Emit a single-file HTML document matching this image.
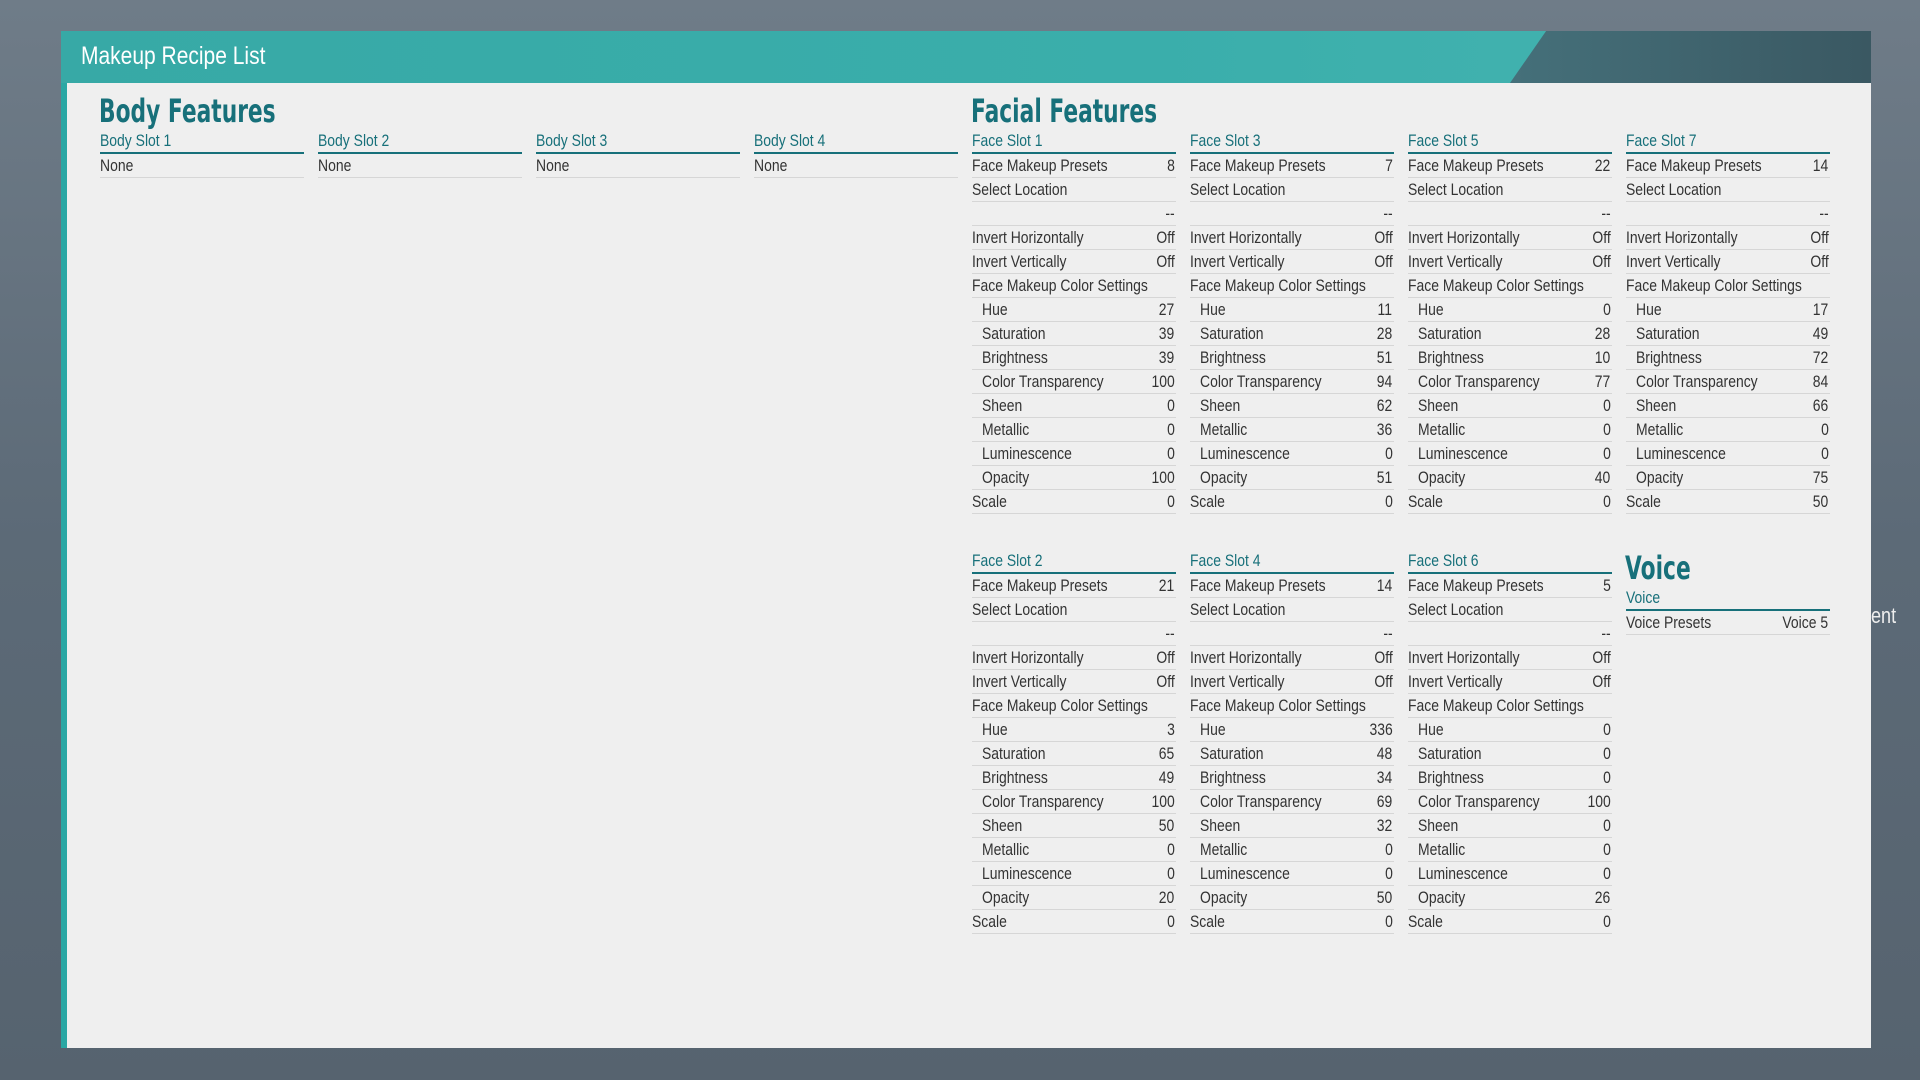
<!DOCTYPE html>
<html><head><meta charset="utf-8"><style>
*{margin:0;padding:0;box-sizing:border-box}
body{width:1920px;height:1080px;overflow:hidden;position:relative;background:linear-gradient(180deg,#6f7c88 0%,#5c6a77 50%,#56636f 100%);font-family:"Liberation Sans",sans-serif}
.panel{position:absolute;left:61px;top:31px;width:1810px;height:1017px;background:#efefef;border-left:6px solid #2aa7a4}
.hdr{position:absolute;left:61px;top:31px;width:1810px;height:52px;background:linear-gradient(90deg,#37a9a6 0%,#3aaeab 60%,#46b4b1 100%)}
.hdr2{position:absolute;left:1510px;top:31px;width:361px;height:52px;background:linear-gradient(90deg,#45707a,#3a5862);clip-path:polygon(10% 0,100% 0,100% 100%,0 100%)}
.ttl{position:absolute;left:81px;top:42px;color:#fff;font-size:25px;transform:scaleX(.84);transform-origin:left;white-space:nowrap}
.h1{position:absolute;font-size:32px;font-weight:bold;color:#17707a;font-family:"DejaVu Sans","Liberation Sans",sans-serif;transform:scaleX(.68);transform-origin:left;white-space:nowrap}
.col{position:absolute;width:204px;font-size:17px;color:#333}
.sh{height:24px;line-height:22px;color:#17707a;border-bottom:2px solid #17707a;white-space:nowrap}
.sh span{display:inline-block;transform:scaleX(.82);transform-origin:left}
.r{height:24px;line-height:23px;border-bottom:1px solid #d6d6d6;display:flex;justify-content:space-between;white-space:nowrap}
.r span{display:inline-block;transform:scaleX(.82);transform-origin:left}
.r b{font-weight:normal;padding-right:2px;display:inline-block;transform:scaleX(.82);transform-origin:right}
.i span{margin-left:10px}
.ent{position:absolute;left:1871px;top:603px;color:#eee;font-size:22px;transform:scaleX(.82);transform-origin:left}
</style></head><body>
<div class="panel"></div>
<div class="hdr"></div>
<div class="hdr2"></div>
<div class="ttl">Makeup Recipe List</div>
<div class="h1" style="left:99px;top:92px">Body Features</div>
<div class="h1" style="left:971px;top:92px">Facial Features</div>
<div class="col" style="left:100px;top:130px"><div class="sh"><span>Body Slot 1</span></div><div class="r"><span>None</span></div></div>
<div class="col" style="left:318px;top:130px"><div class="sh"><span>Body Slot 2</span></div><div class="r"><span>None</span></div></div>
<div class="col" style="left:536px;top:130px"><div class="sh"><span>Body Slot 3</span></div><div class="r"><span>None</span></div></div>
<div class="col" style="left:754px;top:130px"><div class="sh"><span>Body Slot 4</span></div><div class="r"><span>None</span></div></div>

<div class="col" style="left:972px;top:130px"><div class="sh"><span>Face Slot 1</span></div>
<div class="r"><span>Face Makeup Presets</span><b>8</b></div><div class="r"><span>Select Location</span></div><div class="r"><span></span><b>--</b></div>
<div class="r"><span>Invert Horizontally</span><b>Off</b></div><div class="r"><span>Invert Vertically</span><b>Off</b></div><div class="r"><span>Face Makeup Color Settings</span></div>
<div class="r i"><span>Hue</span><b>27</b></div><div class="r i"><span>Saturation</span><b>39</b></div><div class="r i"><span>Brightness</span><b>39</b></div><div class="r i"><span>Color Transparency</span><b>100</b></div><div class="r i"><span>Sheen</span><b>0</b></div><div class="r i"><span>Metallic</span><b>0</b></div><div class="r i"><span>Luminescence</span><b>0</b></div><div class="r i"><span>Opacity</span><b>100</b></div><div class="r"><span>Scale</span><b>0</b></div></div>

<div class="col" style="left:1190px;top:130px"><div class="sh"><span>Face Slot 3</span></div>
<div class="r"><span>Face Makeup Presets</span><b>7</b></div><div class="r"><span>Select Location</span></div><div class="r"><span></span><b>--</b></div>
<div class="r"><span>Invert Horizontally</span><b>Off</b></div><div class="r"><span>Invert Vertically</span><b>Off</b></div><div class="r"><span>Face Makeup Color Settings</span></div>
<div class="r i"><span>Hue</span><b>11</b></div><div class="r i"><span>Saturation</span><b>28</b></div><div class="r i"><span>Brightness</span><b>51</b></div><div class="r i"><span>Color Transparency</span><b>94</b></div><div class="r i"><span>Sheen</span><b>62</b></div><div class="r i"><span>Metallic</span><b>36</b></div><div class="r i"><span>Luminescence</span><b>0</b></div><div class="r i"><span>Opacity</span><b>51</b></div><div class="r"><span>Scale</span><b>0</b></div></div>

<div class="col" style="left:1408px;top:130px"><div class="sh"><span>Face Slot 5</span></div>
<div class="r"><span>Face Makeup Presets</span><b>22</b></div><div class="r"><span>Select Location</span></div><div class="r"><span></span><b>--</b></div>
<div class="r"><span>Invert Horizontally</span><b>Off</b></div><div class="r"><span>Invert Vertically</span><b>Off</b></div><div class="r"><span>Face Makeup Color Settings</span></div>
<div class="r i"><span>Hue</span><b>0</b></div><div class="r i"><span>Saturation</span><b>28</b></div><div class="r i"><span>Brightness</span><b>10</b></div><div class="r i"><span>Color Transparency</span><b>77</b></div><div class="r i"><span>Sheen</span><b>0</b></div><div class="r i"><span>Metallic</span><b>0</b></div><div class="r i"><span>Luminescence</span><b>0</b></div><div class="r i"><span>Opacity</span><b>40</b></div><div class="r"><span>Scale</span><b>0</b></div></div>

<div class="col" style="left:1626px;top:130px"><div class="sh"><span>Face Slot 7</span></div>
<div class="r"><span>Face Makeup Presets</span><b>14</b></div><div class="r"><span>Select Location</span></div><div class="r"><span></span><b>--</b></div>
<div class="r"><span>Invert Horizontally</span><b>Off</b></div><div class="r"><span>Invert Vertically</span><b>Off</b></div><div class="r"><span>Face Makeup Color Settings</span></div>
<div class="r i"><span>Hue</span><b>17</b></div><div class="r i"><span>Saturation</span><b>49</b></div><div class="r i"><span>Brightness</span><b>72</b></div><div class="r i"><span>Color Transparency</span><b>84</b></div><div class="r i"><span>Sheen</span><b>66</b></div><div class="r i"><span>Metallic</span><b>0</b></div><div class="r i"><span>Luminescence</span><b>0</b></div><div class="r i"><span>Opacity</span><b>75</b></div><div class="r"><span>Scale</span><b>50</b></div></div>

<div class="col" style="left:972px;top:550px"><div class="sh"><span>Face Slot 2</span></div>
<div class="r"><span>Face Makeup Presets</span><b>21</b></div><div class="r"><span>Select Location</span></div><div class="r"><span></span><b>--</b></div>
<div class="r"><span>Invert Horizontally</span><b>Off</b></div><div class="r"><span>Invert Vertically</span><b>Off</b></div><div class="r"><span>Face Makeup Color Settings</span></div>
<div class="r i"><span>Hue</span><b>3</b></div><div class="r i"><span>Saturation</span><b>65</b></div><div class="r i"><span>Brightness</span><b>49</b></div><div class="r i"><span>Color Transparency</span><b>100</b></div><div class="r i"><span>Sheen</span><b>50</b></div><div class="r i"><span>Metallic</span><b>0</b></div><div class="r i"><span>Luminescence</span><b>0</b></div><div class="r i"><span>Opacity</span><b>20</b></div><div class="r"><span>Scale</span><b>0</b></div></div>

<div class="col" style="left:1190px;top:550px"><div class="sh"><span>Face Slot 4</span></div>
<div class="r"><span>Face Makeup Presets</span><b>14</b></div><div class="r"><span>Select Location</span></div><div class="r"><span></span><b>--</b></div>
<div class="r"><span>Invert Horizontally</span><b>Off</b></div><div class="r"><span>Invert Vertically</span><b>Off</b></div><div class="r"><span>Face Makeup Color Settings</span></div>
<div class="r i"><span>Hue</span><b>336</b></div><div class="r i"><span>Saturation</span><b>48</b></div><div class="r i"><span>Brightness</span><b>34</b></div><div class="r i"><span>Color Transparency</span><b>69</b></div><div class="r i"><span>Sheen</span><b>32</b></div><div class="r i"><span>Metallic</span><b>0</b></div><div class="r i"><span>Luminescence</span><b>0</b></div><div class="r i"><span>Opacity</span><b>50</b></div><div class="r"><span>Scale</span><b>0</b></div></div>

<div class="col" style="left:1408px;top:550px"><div class="sh"><span>Face Slot 6</span></div>
<div class="r"><span>Face Makeup Presets</span><b>5</b></div><div class="r"><span>Select Location</span></div><div class="r"><span></span><b>--</b></div>
<div class="r"><span>Invert Horizontally</span><b>Off</b></div><div class="r"><span>Invert Vertically</span><b>Off</b></div><div class="r"><span>Face Makeup Color Settings</span></div>
<div class="r i"><span>Hue</span><b>0</b></div><div class="r i"><span>Saturation</span><b>0</b></div><div class="r i"><span>Brightness</span><b>0</b></div><div class="r i"><span>Color Transparency</span><b>100</b></div><div class="r i"><span>Sheen</span><b>0</b></div><div class="r i"><span>Metallic</span><b>0</b></div><div class="r i"><span>Luminescence</span><b>0</b></div><div class="r i"><span>Opacity</span><b>26</b></div><div class="r"><span>Scale</span><b>0</b></div></div>

<div class="h1" style="left:1625px;top:549px">Voice</div>
<div class="col" style="left:1626px;top:587px"><div class="sh"><span>Voice</span></div><div class="r"><span>Voice Presets</span><b>Voice 5</b></div></div>
<div class="ent">ent</div>
</body></html>
